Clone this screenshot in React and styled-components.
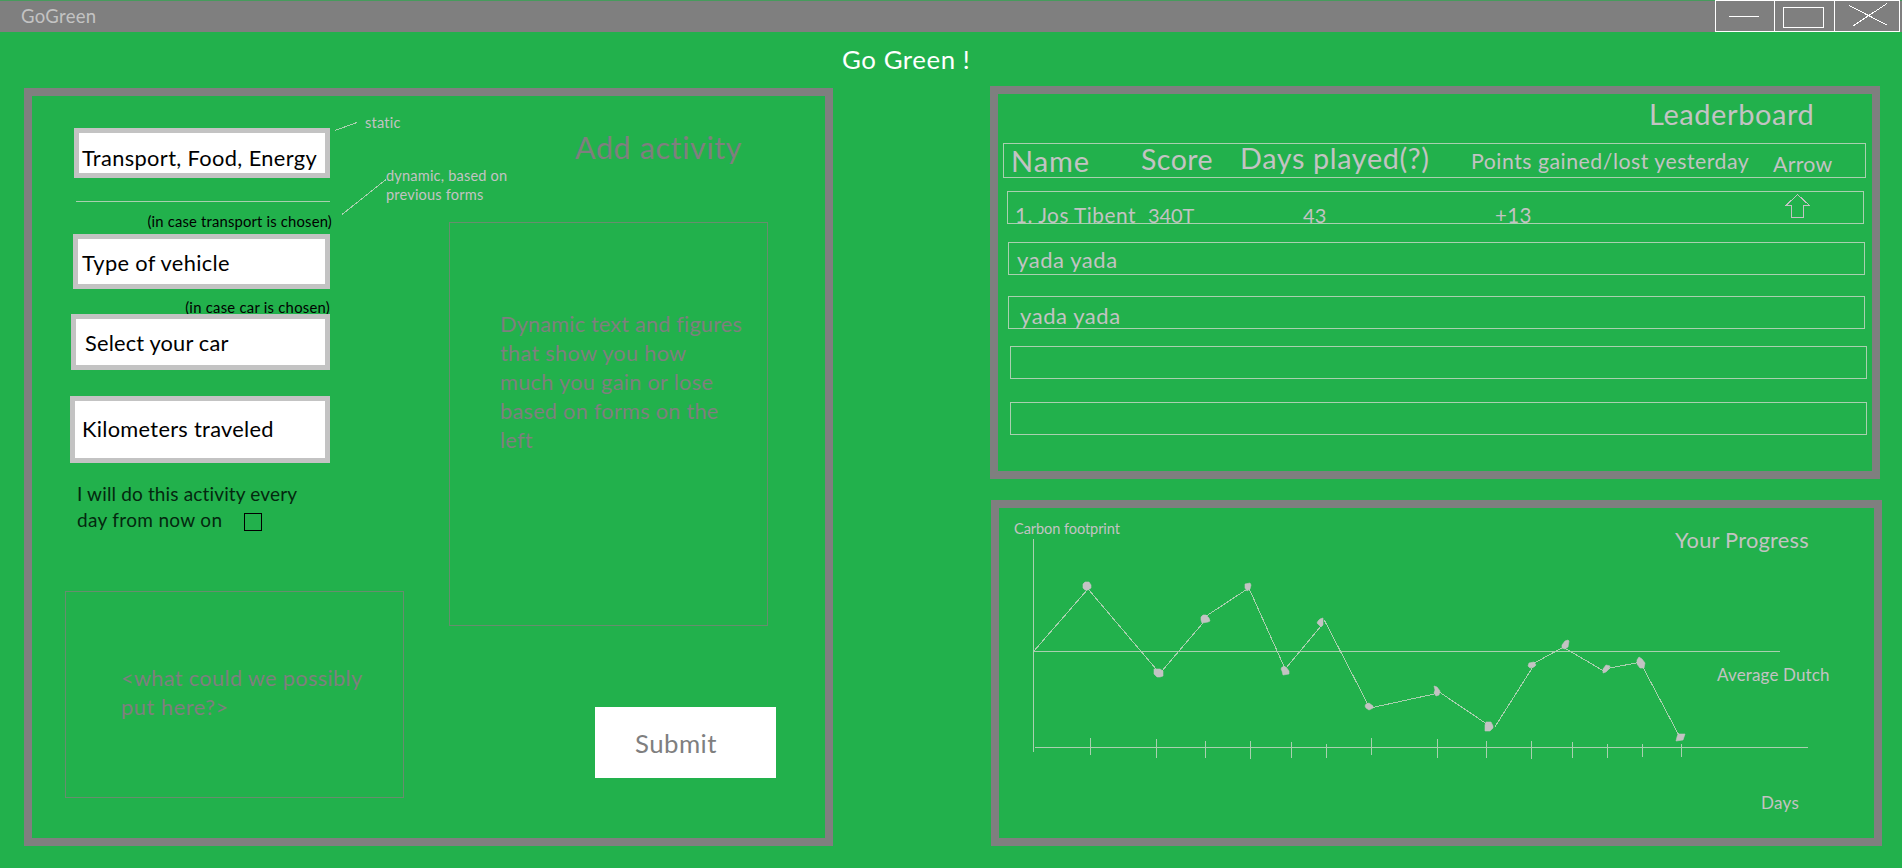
import React from "react";
import styled, { createGlobalStyle } from "styled-components";

const green = "#22b14c";
const gray = "#7f7f7f";
const silver = "#c3c3c3";
const paleLine = "#a9d0af";
const dimLine = "#678e6e";

const GlobalStyle = createGlobalStyle`
  * { box-sizing: border-box; }
  body {
    margin: 0;
    background: ${green};
    font-family: Lato, "Liberation Sans", sans-serif;
    overflow: hidden;
  }
`;

const Window = styled.div`
  width: 1902px;
  height: 868px;
  background: ${green};
  overflow: hidden;
`;

const Text = styled.div`
  font-size: ${(p) => p.$size}px;
  line-height: ${(p) => p.$line || Math.round(p.$size * 1.2)}px;
  letter-spacing: ${(p) => p.$spacing || 0}px;
  color: ${(p) => p.$color || silver};
  white-space: pre;
`;

const TitleBar = styled.header`
  display: flex;
  justify-content: space-between;
  height: 32px;
  padding: 0 2px 0 21px;
  background: linear-gradient(#469b5c 0 1px, ${gray} 1px);
`;

const AppName = styled(Text)`
  margin-top: 5px;
`;

const Controls = styled.div`
  display: flex;
  width: 185px;
  border: 1px solid #fff;
`;

const ControlButton = styled.button`
  display: block;
  width: ${(p) => p.$width}px;
  height: 30px;
  padding: 0;
  border: 0;
  border-right: ${(p) => (p.$last ? 0 : 1)}px solid #fff;
  background: ${gray};
  svg { display: block; }
`;

const Heading = styled(Text)`
  height: 54px;
  margin: 0;
  padding-left: 842px;
  font-weight: 400;
`;

const Main = styled.main`
  display: flex;
  align-items: flex-start;
  padding-left: 24px;
`;

const Panel = styled.section`
  position: relative;
  width: ${(p) => p.$width}px;
  height: ${(p) => p.$height}px;
  border: 8px solid ${gray};
`;

const ActivityPanel = styled(Panel)`
  display: flex;
  margin-top: 2px;
`;

const Sidebar = styled.div`
  margin-left: 157px;
`;

const FormColumn = styled.div`
  width: 372px;
`;

const Form = styled.div`
  display: flex;
  flex-direction: column;
  align-items: flex-end;
  width: 298px;
  padding-top: 32px;
`;

const Field = styled.div`
  width: ${(p) => p.$width}px;
  height: ${(p) => p.$height}px;
  margin-top: ${(p) => p.$gap || 0}px;
  padding: ${(p) => p.$top}px 0 0 ${(p) => p.$left}px;
  border: 5px solid ${silver};
  background: #fff;
`;

const Divider = styled.div`
  width: 254px;
  height: 1px;
  margin-top: 23px;
  background: ${paleLine};
`;

const Hint = styled(Text)`
  margin: ${(p) => p.$margin};
`;

const Repeat = styled.label`
  width: 253px;
  margin-top: 18px;
`;

const RepeatLine = styled.div`
  display: flex;
  height: 26px;
`;

const Checkbox = styled.span`
  width: 18px;
  height: 18px;
  margin: 6px 0 0 22px;
  border: 1px solid #000;
`;

const Placeholder = styled.div`
  width: ${(p) => p.$width}px;
  height: ${(p) => p.$height}px;
  margin: ${(p) => p.$margin};
  padding: ${(p) => p.$padding};
  border: 1px solid ${dimLine};
`;

const InfoColumn = styled.div`
  padding: 33px 0 0 32px;
`;

const PanelTitle = styled(Text)`
  padding-left: ${(p) => p.$left}px;
`;

const SubmitButton = styled.button`
  display: block;
  width: 181px;
  height: 71px;
  margin: 81px 0 0 159px;
  padding: 2px 0 0 40px;
  border: 0;
  background: #fff;
  text-align: left;
  font-family: inherit;
`;

const Note = styled(Text)`
  position: absolute;
  left: ${(p) => p.$x}px;
  top: ${(p) => p.$y}px;
`;

const Pointers = styled.svg`
  position: absolute;
  left: 298px;
  top: 20px;
`;

const LeaderTitle = styled(PanelTitle)`
  padding-top: 3px;
`;

const Row = styled.div`
  display: flex;
  align-items: flex-start;
  width: ${(p) => p.$width || 857}px;
  height: ${(p) => p.$height || 33}px;
  margin: ${(p) => p.$gap}px 0 0 ${(p) => p.$left}px;
  padding-left: ${(p) => p.$pad || 0}px;
  border: 1px solid ${paleLine};
`;

const Cell = styled(Text)`
  flex: none;
  width: ${(p) => p.$width}px;
  margin-top: ${(p) => p.$top}px;
`;

const ArrowIcon = styled.svg`
  flex: none;
  margin-top: 2px;
`;

const ProgressPanel = styled(Panel)`
  margin: 21px 0 0 1px;
`;

const ProgressHead = styled.div`
  display: flex;
  justify-content: space-between;
  align-items: flex-start;
  height: 30px;
  padding: 12px 65px 0 15px;
`;

const ProgressTitle = styled(Text)`
  margin-top: 7px;
`;

const Chart = styled.svg`
  display: block;
  margin-left: 31px;
`;

const DaysLabel = styled(Text)`
  margin: 33px 0 0 762px;
`;

const segments = [
  [1033, 651, 1087, 589], [1088, 589, 1156, 669], [1161, 671, 1202, 623],
  [1205, 616, 1246, 589], [1249, 589, 1284, 667], [1286, 667, 1321, 625],
  [1324, 620, 1368, 705], [1372, 707, 1436, 693], [1438, 691, 1487, 724],
  [1494, 727, 1532, 667], [1533, 663, 1564, 646], [1565, 648, 1604, 671],
  [1607, 668, 1638, 662], [1642, 666, 1678, 734],
];

const ticks = [
  [1090, 738, 755], [1156, 739, 758], [1205, 741, 758], [1250, 741, 759],
  [1291, 742, 758], [1326, 744, 758], [1371, 738, 755], [1437, 739, 758],
  [1486, 741, 758], [1531, 741, 759], [1572, 742, 758], [1607, 744, 758],
  [1642, 744, 757], [1681, 744, 757],
];

const dots = [
  "1085,582 1089,582 1091,585 1091,588 1088,590 1085,590 1083,588 1083,584",
  "1154,669 1160,669 1163,671 1163,676 1160,677 1157,677 1154,674",
  "1203,615 1206,615 1209,618 1210,621 1208,622 1202,623 1201,620 1201,617",
  "1245,584 1250,583 1251,585 1250,589 1247,591 1245,588",
  "1282,667 1286,667 1289,671 1289,674 1283,675 1282,671 1281,669",
  "1320,619 1323,618 1323,625 1321,627 1319,625 1317,623 1318,621",
  "1366,704 1369,703 1373,706 1373,708 1369,710 1366,708 1365,706",
  "1434,686 1437,687 1440,691 1439,695 1436,696 1434,693 1435,690",
  "1486,722 1491,722 1493,726 1493,728 1490,731 1485,731 1485,725",
  "1529,663 1534,662 1536,665 1534,667 1530,668 1528,666",
  "1568,640 1569,641 1568,647 1565,649 1562,648 1562,645 1565,641",
  "1606,665 1610,666 1609,669 1606,672 1603,673 1603,669",
  "1639,657 1642,659 1645,663 1644,668 1640,668 1637,664 1637,660",
  "1678,734 1685,734 1683,740 1676,741 1677,737",
];

function WindowControls() {
  return (
    <Controls>
      <ControlButton $width={59} aria-label="Minimize">
        <svg width="58" height="30" shapeRendering="crispEdges">
          <path d="M13 15.5H43" stroke="#fff" />
        </svg>
      </ControlButton>
      <ControlButton $width={60} aria-label="Maximize">
        <svg width="59" height="30" shapeRendering="crispEdges">
          <rect x="8.5" y="6.5" width="40" height="20" fill="none" stroke="#fff" />
        </svg>
      </ControlButton>
      <ControlButton $width={64} $last aria-label="Close">
        <svg width="64" height="30" shapeRendering="crispEdges">
          <path d="M14 4.5L52 24M52 2.5L18 25" stroke="#fff" />
        </svg>
      </ControlButton>
    </Controls>
  );
}

function ActivityForm() {
  return (
    <FormColumn>
      <Form>
        <Field $width={256} $height={50} $top={12} $left={3}>
          <Text $size={21.8} $line={26} $spacing={0.37} $color="#000">Transport, Food, Energy</Text>
        </Field>
        <Divider />
        <Hint $size={14.8} $line={18} $spacing={0.18} $color="#000" $margin="10px -2px 4px 0">(in case transport is chosen)</Hint>
        <Field $width={257} $height={55} $top={11} $left={4}>
          <Text $size={21.8} $line={26} $spacing={0.33} $color="#000">Type of vehicle</Text>
        </Field>
        <Hint $size={14.8} $line={18} $spacing={0.26} $color="#000" $margin="9px 0 -2px 0">(in case car is chosen)</Hint>
        <Field $width={259} $height={56} $top={11} $left={9}>
          <Text $size={21.8} $line={26} $spacing={0.18} $color="#000">Select your car</Text>
        </Field>
        <Field $width={260} $height={67} $gap={26} $top={15} $left={7}>
          <Text $size={21.8} $line={26} $spacing={0.3} $color="#000">Kilometers traveled</Text>
        </Field>
        <Repeat>
          <Text $size={19} $line={26} $spacing={0.15} $color="#04280f">I will do this activity every</Text>
          <RepeatLine>
            <Text $size={19} $line={26} $spacing={0.32} $color="#04280f">day from now on</Text>
            <Checkbox />
          </RepeatLine>
        </Repeat>
      </Form>
      <Placeholder $width={339} $height={207} $margin="58px 0 0 33px" $padding="71px 0 0 55px">
        <Text $size={21.8} $line={29} $spacing={0.3} $color={gray}>{"<what could we possibly"}</Text>
        <Text $size={21.8} $line={29} $spacing={0.55} $color={gray}>{"put here?>"}</Text>
      </Placeholder>
    </FormColumn>
  );
}

function ActivityInfo() {
  const lines = [
    ["Dynamic text and figures", 0.13],
    ["that show you how", 0.26],
    ["much you gain or lose", 0.26],
    ["based on forms on the", 0.22],
    ["left", 0.2],
  ];
  return (
    <InfoColumn>
      <PanelTitle $size={30.5} $line={36} $spacing={0.6} $color={gray} $left={139}>Add activity</PanelTitle>
      <Placeholder $width={319} $height={404} $margin="57px 0 0 13px" $padding="86px 0 0 50px">
        {lines.map(([line, spacing]) => (
          <Text key={line} $size={21.8} $line={29} $spacing={spacing} $color={gray}>{line}</Text>
        ))}
      </Placeholder>
      <SubmitButton>
        <Text $size={25.8} $line={31} $spacing={0.45} $color={gray}>Submit</Text>
      </SubmitButton>
    </InfoColumn>
  );
}

function Leaderboard() {
  return (
    <Panel $width={890} $height={393}>
      <LeaderTitle $size={29} $line={34} $spacing={0.58} $left={651}>Leaderboard</LeaderTitle>
      <Row $width={863} $height={35} $gap={12} $left={5} $pad={7}>
        <Cell $size={29} $spacing={0.95} $width={130} $top={-1}>Name</Cell>
        <Cell $size={28.5} $spacing={0.45} $width={99} $top={-2}>Score</Cell>
        <Cell $size={28.8} $spacing={0.63} $width={231} $top={-3}>Days played(?)</Cell>
        <Cell $size={21.3} $spacing={0.5} $width={302} $top={4}>Points gained/lost yesterday</Cell>
        <Cell $size={21.3} $spacing={0.3} $width={70} $top={7}>Arrow</Cell>
      </Row>
      <Row $gap={13} $left={9} $pad={7}>
        <Cell $size={20.8} $line={24} $spacing={0.5} $width={133} $top={11}>1. Jos Tibent</Cell>
        <Cell $size={20} $line={24} $spacing={-0.13} $width={155} $top={11}>340T</Cell>
        <Cell $size={20} $line={24} $spacing={0.2} $width={192} $top={11}>43</Cell>
        <Cell $size={20.5} $line={24} $spacing={0.3} $width={290} $top={11}>+13</Cell>
        <ArrowIcon width="26" height="26" shapeRendering="crispEdges">
          <path d="M12.5 0.5L1 11.5H6.5V23.5H18.5V11.5H24.5L12.5 0.5" fill="none" stroke={silver} />
        </ArrowIcon>
      </Row>
      <Row $gap={18} $left={10} $pad={8}>
        <Cell $size={22} $line={26} $spacing={0.55} $width={120} $top={4}>yada yada</Cell>
      </Row>
      <Row $gap={21} $left={10} $pad={11}>
        <Cell $size={22} $line={26} $spacing={0.55} $width={120} $top={6}>yada yada</Cell>
      </Row>
      <Row $gap={17} $left={12} />
      <Row $gap={23} $left={12} />
    </Panel>
  );
}

function Progress() {
  return (
    <ProgressPanel $width={891} $height={346}>
      <ProgressHead>
        <Text $size={14.6} $line={18} $spacing={-0.1}>Carbon footprint</Text>
        <ProgressTitle $size={21.8} $line={26} $spacing={0.25}>Your Progress</ProgressTitle>
      </ProgressHead>
      <Chart width="800" height="222" viewBox="1030 538 800 222">
        <g stroke={paleLine} shapeRendering="crispEdges">
          <path d="M1033.5 539V752M1034 651.5H1780M1035 747.5H1808" />
          {ticks.map(([x, a, b]) => <path key={x} d={`M${x + 0.5} ${a}V${b}`} />)}
          {segments.map(([a, b, c, d]) => <path key={a} d={`M${a + 0.5} ${b + 0.5}L${c + 0.5} ${d + 0.5}`} />)}
        </g>
        <g fill={silver}>
          {dots.map((d) => <polygon key={d} points={d} stroke={silver} strokeWidth="0.6" strokeLinejoin="round" />)}
        </g>
      </Chart>
      <Note $size={17} $line={20} $spacing={0.14} $x={718} $y={157}>Average Dutch</Note>
      <DaysLabel $size={17} $line={20} $spacing={0.31}>Days</DaysLabel>
    </ProgressPanel>
  );
}

export default function App() {
  return (
    <Window>
      <GlobalStyle />
      <TitleBar>
        <AppName $size={18.5} $line={22} $spacing={0.3}>GoGreen</AppName>
        <WindowControls />
      </TitleBar>
      <Heading as="h1" $size={25.8} $line={55} $spacing={0.57} $color="#fff">Go Green !</Heading>
      <Main>
        <ActivityPanel $width={809} $height={758}>
          <ActivityForm />
          <ActivityInfo />
          <Pointers width="60" height="102" shapeRendering="crispEdges">
            <path d="M5 14.5L27 6.5M12 98.5L56 63.5" stroke={paleLine} />
          </Pointers>
          <Note $size={14.6} $line={18} $spacing={0.2} $x={333} $y={18}>static</Note>
          <Note $size={14.6} $line={19} $spacing={0.17} $x={354} $y={70}>{"dynamic, based on\nprevious forms"}</Note>
        </ActivityPanel>
        <Sidebar>
          <Leaderboard />
          <Progress />
        </Sidebar>
      </Main>
    </Window>
  );
}
